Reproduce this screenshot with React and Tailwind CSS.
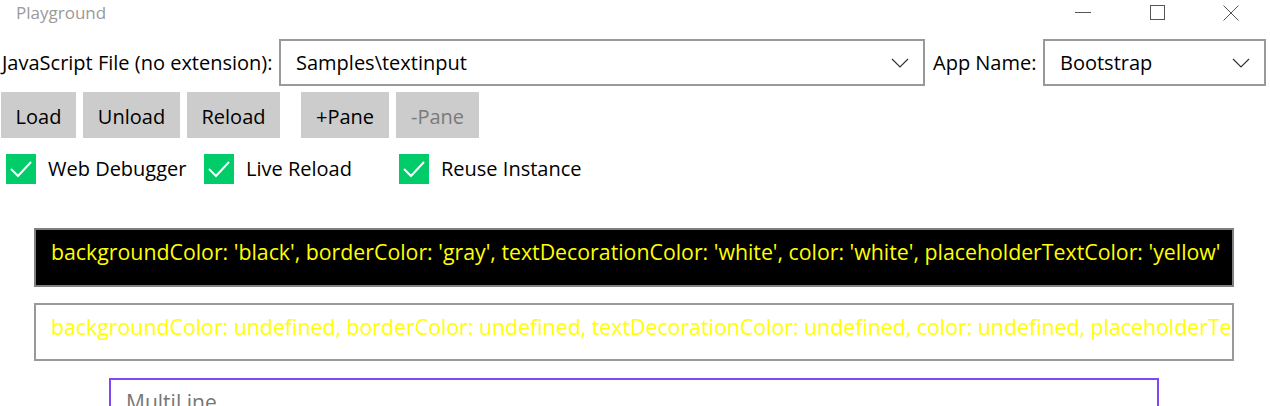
import React from 'react';

const font = { fontFamily: '"Open Sans", "Noto Sans", sans-serif' };

const Chevron = () => (
    <svg width="18" height="10" viewBox="0 0 18 10" fill="none" stroke="#333" strokeWidth="1.2">
        <polyline points="1,1 9,9 17,1" />
    </svg>
);

const Check = () => (
    <div className="flex h-[30px] w-[30px] shrink-0 items-center justify-center bg-[#00cc6a]">
        <svg width="22" height="18" viewBox="0 0 22 18" fill="none" stroke="white" strokeWidth="2">
            <polyline points="1,9 8,16 21,2" />
        </svg>
    </div>
);

const Button = ({ children, disabled, className = '' }) => (
    <button
        className={`h-[46px] bg-[#cccccc] pt-[3px] text-[20px] ${disabled ? 'text-[#7a7a7a]' : 'text-black'} ${className}`}
    >
        {children}
    </button>
);

const CheckItem = ({ label, className = '' }) => (
    <div className={`flex items-center ${className}`}>
        <Check />
        <span className="ml-[12px] whitespace-nowrap">{label}</span>
    </div>
);

const App = () => {
    return (
        <div className="flex h-[406px] w-[1270px] flex-col overflow-hidden bg-white text-black" style={font}>
            {/* title bar */}
            <div className="flex h-[25px] shrink-0 items-center">
                <span className="pl-[16px] text-[17px] text-[#9a9a9a]">Playground</span>
                <div className="ml-auto flex items-center">
                    <div className="flex w-[78px] justify-center">
                        <div className="h-px w-[16px] bg-[#555]" />
                    </div>
                    <div className="flex w-[70px] justify-center">
                        <div className="h-[15px] w-[15px] border border-[#555]" />
                    </div>
                    <div className="flex w-[78px] justify-center">
                        <svg width="16" height="16" viewBox="0 0 16 16" stroke="#555" strokeWidth="1">
                            <line x1="0.5" y1="0.5" x2="15.5" y2="15.5" />
                            <line x1="15.5" y1="0.5" x2="0.5" y2="15.5" />
                        </svg>
                    </div>
                </div>
            </div>

            {/* file row */}
            <div className="mt-[14px] flex shrink-0 items-center pl-[2px]">
                <span className="w-[277px] whitespace-nowrap text-[20px]">JavaScript File (no extension):</span>
                <div className="flex h-[47px] w-[646px] items-center border-2 border-[#999] pl-[15px] pr-[14px]">
                    <span className="text-[20px]">Samples\textinput</span>
                    <span className="ml-auto"><Chevron /></span>
                </div>
                <span className="ml-[8px] w-[110px] whitespace-nowrap text-[20px]">App Name:</span>
                <div className="flex h-[47px] w-[223px] items-center border-2 border-[#999] pl-[15px] pr-[14px]">
                    <span className="text-[20px]">Bootstrap</span>
                    <span className="ml-auto"><Chevron /></span>
                </div>
            </div>

            {/* buttons */}
            <div className="mt-[6px] flex shrink-0 pl-[1px]">
                <Button className="w-[75px]">Load</Button>
                <Button className="ml-[7px] w-[97px]">Unload</Button>
                <Button className="ml-[7px] w-[93px]">Reload</Button>
                <Button className="ml-[21px] w-[88px]">+Pane</Button>
                <Button disabled className="ml-[7px] w-[83px]">-Pane</Button>
            </div>

            {/* checkboxes */}
            <div className="mt-[16px] flex shrink-0 items-center pl-[6px] text-[20px]">
                <CheckItem label="Web Debugger" className="w-[198px]" />
                <CheckItem label="Live Reload" className="w-[195px]" />
                <CheckItem label="Reuse Instance" />
            </div>

            {/* text inputs */}
            <div className="ml-[34px] mt-[44px] h-[59px] w-[1200px] shrink-0 overflow-hidden whitespace-nowrap border-2 border-[#808080] bg-black pl-[15px] pt-[8px] text-[21.3px] leading-[28px] text-[#ffff00]">
                backgroundColor: 'black', borderColor: 'gray', textDecorationColor: 'white', color: 'white', placeholderTextColor: 'yellow'
            </div>
            <div className="ml-[34px] mt-[16px] h-[58px] w-[1200px] shrink-0 overflow-hidden whitespace-nowrap border-2 border-[#999] bg-white pl-[15px] pt-[8px] text-[21.3px] leading-[28px] text-[#ffff00]">
                backgroundColor: undefined, borderColor: undefined, textDecorationColor: undefined, color: undefined, placeholderTextColor: undefined
            </div>
            <div className="ml-[109px] mt-[17px] h-[60px] w-[1050px] shrink-0 border-2 border-[#7f48f3] pl-[15px] pt-[8px] text-[21px] leading-[28px] text-[#767676]">
                MultiLine
            </div>
        </div>
    );
};

export default App;
